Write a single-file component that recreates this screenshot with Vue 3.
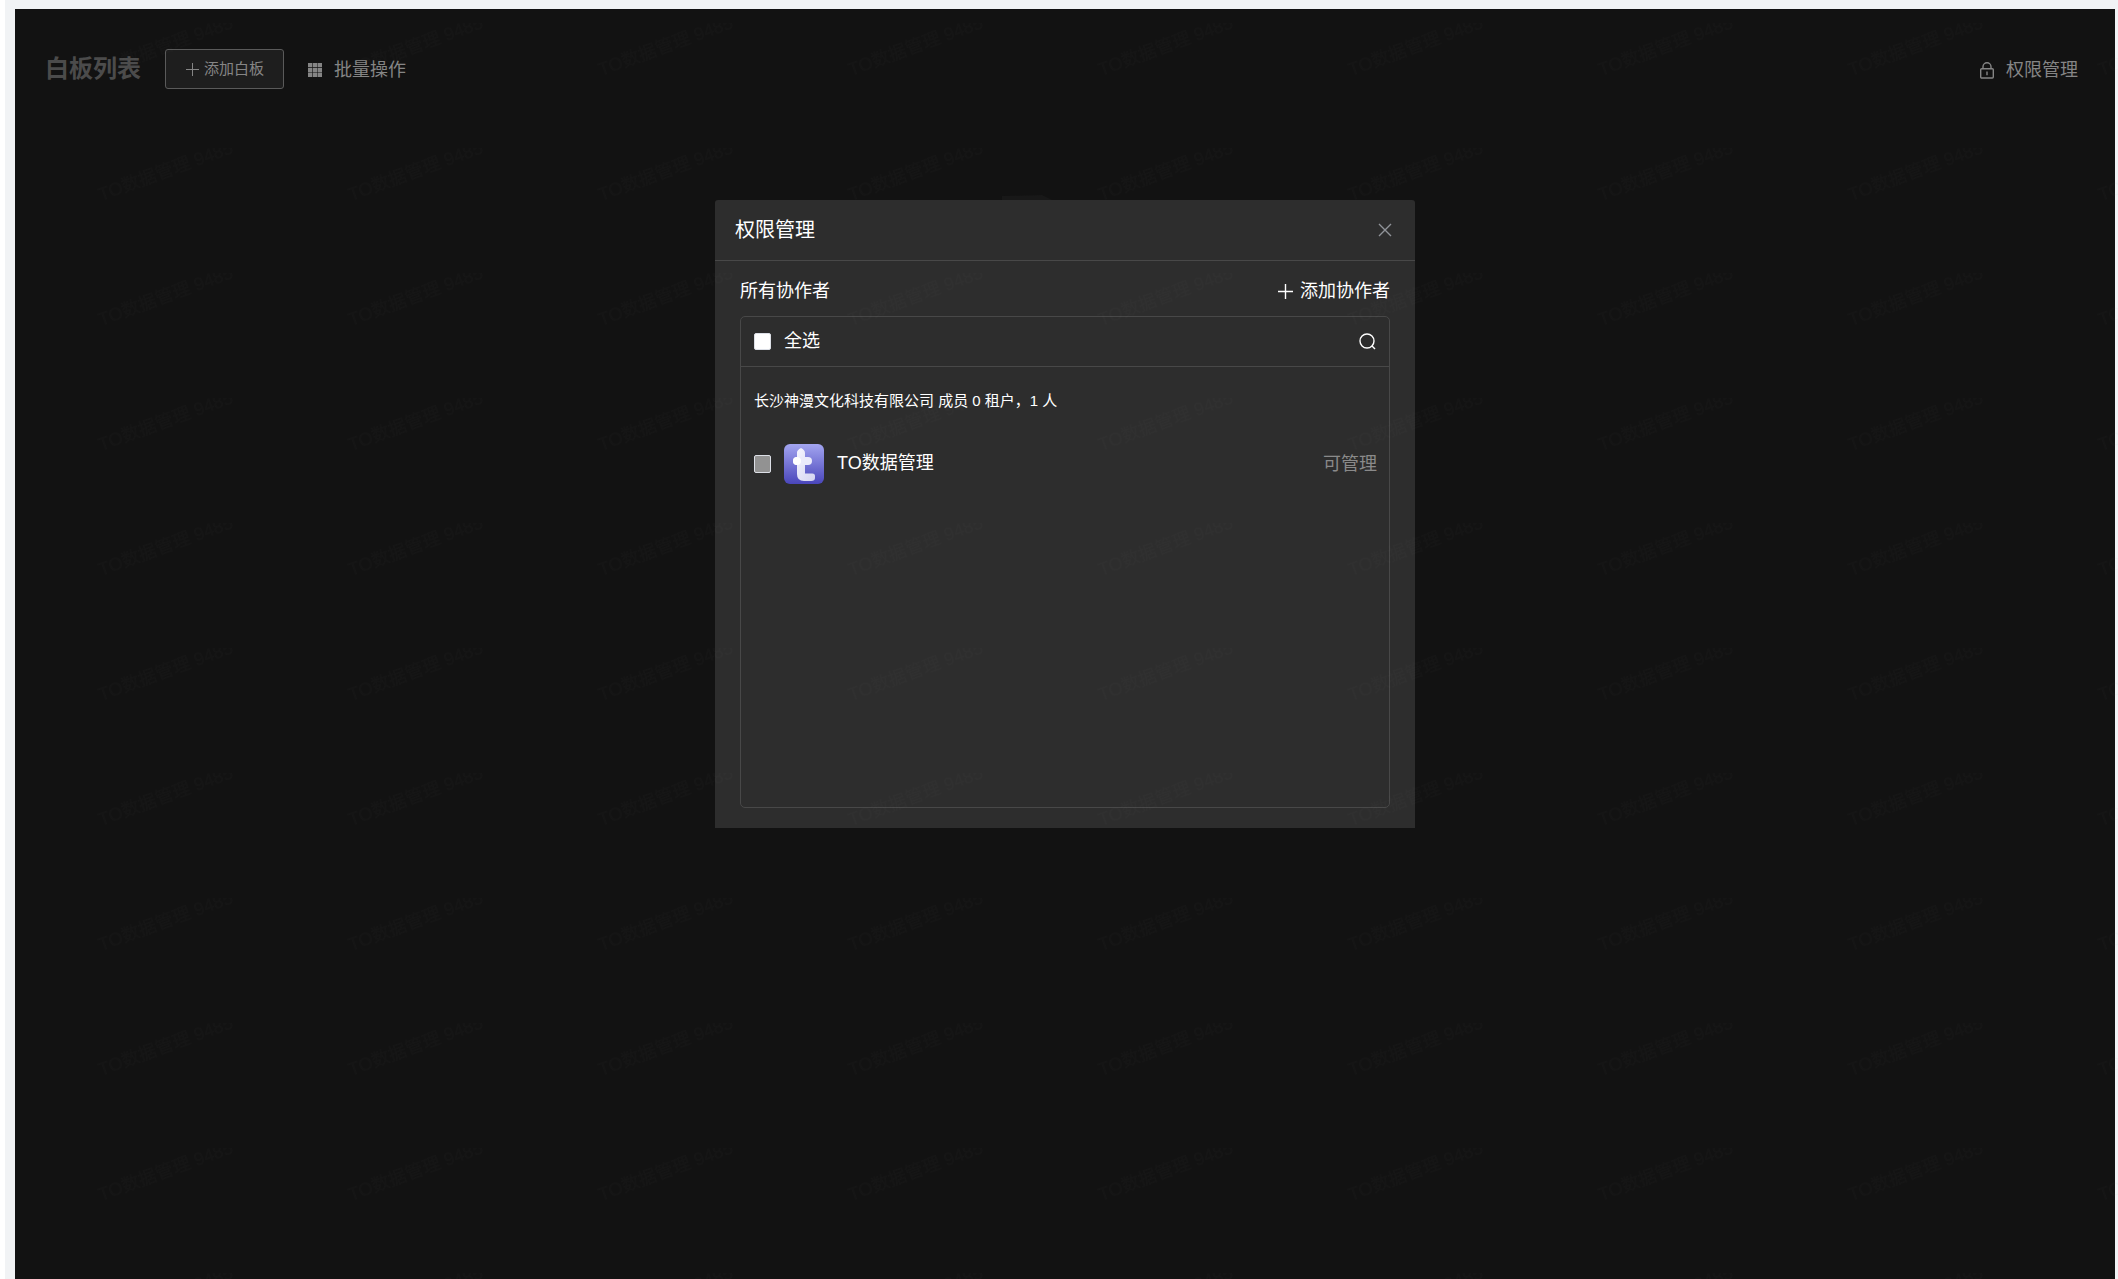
<script setup>
import {ref} from "vue"

const allChecked = ref(false)
const members = ref([
    {id: 1, name: "TO数据管理", role: "可管理", checked: false, disabled: true}
])

const toggleAll = () => {
    members.value.forEach((m) => {
        if (!m.disabled) m.checked = allChecked.value
    })
}
</script>

<template>
    <div class="page">
        <main class="board">
            <header class="toolbar">
                <h1>白板列表</h1>
                <button type="button" class="add-board">
                    <svg viewBox="0 0 15 15" width="15" height="15"><path d="M7.5 1v13M1 7.5h13" /></svg>
                    <span>添加白板</span>
                </button>
                <button type="button" class="tool">
                    <svg class="grid-icon" viewBox="0 0 14 14" width="14" height="14">
                        <path d="M0 0h4.300v4.300H0zM4.900 0h4.300v4.300H4.900zM9.700 0H14v4.300H9.700zM0 4.900h4.300v4.300H0zM4.900 4.900h4.300v4.300H4.900zM9.700 4.900H14v4.300H9.700zM0 9.700h4.300V14H0zM4.900 9.700h4.300V14H4.900zM9.700 9.700H14V14H9.700z" />
                    </svg>
                    <span>批量操作</span>
                </button>
                <button type="button" class="tool auth">
                    <svg class="bold" viewBox="0 0 14 17" width="14" height="17">
                        <path d="M1.700 6.700h10.600a1 1 0 0 1 1 1v7.300a1 1 0 0 1-1 1H1.700a1 1 0 0 1-1-1V7.700a1 1 0 0 1 1-1zM3 6.700V4.700a4 4 0 0 1 8 0v2M7 9.500v3.800" />
                    </svg>
                    <span>权限管理</span>
                </button>
            </header>
            <div class="empty">
                <svg viewBox="0 0 130 100" width="130" height="100"><path d="M2 1l40-1 10 5h78v95H0z" /></svg>
            </div>

            <div class="overlay">
                <section class="dialog" role="dialog" aria-labelledby="dialogtitle">
                    <header class="dialog-head">
                        <h2 id="dialogtitle">权限管理</h2>
                        <button type="button" class="close" aria-label="关闭">
                            <svg class="bold" viewBox="0 0 14 14" width="14" height="14"><path d="M1 1l12 12M13 1L1 13" /></svg>
                        </button>
                    </header>
                    <div class="dialog-body">
                        <div class="collab">
                            <span>所有协作者</span>
                            <button type="button" class="add-user">
                                <svg class="bold" viewBox="0 0 15 15" width="15" height="15"><path d="M7.500 0v15M0 7.500h15" /></svg>
                                <span>添加协作者</span>
                            </button>
                        </div>
                        <div class="panel">
                            <div class="panel-head">
                                <label class="check-label" for="checkall">
                                    <input id="checkall" v-model="allChecked" type="checkbox" @change="toggleAll">
                                    <span>全选</span>
                                </label>
                                <button type="button" class="search" aria-label="搜索">
                                    <svg class="bold" viewBox="0 0 17 17" width="17" height="17"><circle cx="8" cy="8" r="7" /><path d="M12.800 12.800l3.200 3.200" /></svg>
                                </button>
                            </div>
                            <div class="panel-body">
                                <p class="org">长沙神漫文化科技有限公司 成员 0 租户，1 人</p>
                                <div v-for="m in members" :key="m.id" class="member">
                                    <label class="check-label" :for="'member' + m.id">
                                        <input :id="'member' + m.id" v-model="m.checked" type="checkbox" :disabled="m.disabled">
                                        <svg class="avatar" viewBox="0 0 40 40" width="40" height="40">
                                            <defs>
                                                <linearGradient id="avatarbg" x1="0" y1="0" x2="0" y2="1">
                                                    <stop offset="0" stop-color="#a3a5f0" />
                                                    <stop offset="1" stop-color="#4a46bb" />
                                                </linearGradient>
                                                <linearGradient id="stem" x1="0" y1="0" x2="1" y2="1">
                                                    <stop offset="0" stop-color="#f6f6ff" />
                                                    <stop offset="1" stop-color="#d3d3f0" />
                                                </linearGradient>
                                            </defs>
                                            <rect width="40" height="40" rx="6" fill="url(#avatarbg)" />
                                            <path d="M13 8.500Q13 6 17 4q4 2 4 5V29.500h7.500q2.500 0 2.500 2.500v2q0 3-4 3h-7q-7 0-7-7z" fill="url(#stem)" />
                                            <rect x="9" y="13" width="19" height="8" rx="4" fill="#ebebfb" />
                                            <circle cx="13" cy="17" r="4" fill="#fff" />
                                        </svg>
                                        <span class="name">{{ m.name }}</span>
                                    </label>
                                    <span class="role">{{ m.role }}</span>
                                </div>
                            </div>
                        </div>
                    </div>
                </section>
            </div>
        </main>

        <!-- tiled user watermark, above everything -->
        <svg class="watermark" width="100%" height="100%" aria-hidden="true">
            <defs>
                <pattern id="mark" x="80" y="23" width="250" height="125" patternUnits="userSpaceOnUse">
                    <text x="16" y="53" transform="rotate(-20 16 53)">TO数据管理 9485</text>
                </pattern>
            </defs>
            <rect y="23" width="100%" height="100%" fill="url(#mark)" />
        </svg>
    </div>
</template>

<style>
    body {
        margin: 0;
        background-color: #ffffff;
    }
</style>

<style scoped>
    .page {
        position: relative;
        display: flex;
        box-sizing: border-box;
        min-height: 100vh;
        margin-left: 5px;
        padding: 9px 3px 0 10px;
        background-color: #f1f3f5;
        font-family: "Liberation Sans", "Noto Sans CJK SC", sans-serif;
        font-size: 18px;
        line-height: 30px;
    }

    .board {
        position: relative;
        flex: 1;
        background-color: #121212;
    }

    button {
        display: flex;
        align-items: center;
        padding: 0;
        border: 0;
        background: none;
        color: inherit;
        font: inherit;
        cursor: pointer;
    }

    svg {
        display: block;
        flex: none;
        fill: none;
        stroke: currentColor;
    }

    .bold {
        stroke-width: 1.4;
    }

    .toolbar {
        display: flex;
        align-items: center;
        gap: 24px;
        height: 120px;
        padding: 0 37px 0 30px;
        color: #858585;
    }

    h1 {
        margin: 0;
        color: #4b4b4b;
        font-size: 24px;
        font-weight: 700;
    }

    .toolbar .add-board {
        gap: 4px;
        height: 40px;
        padding: 0 19px;
        border: 1px solid #5a5a5a;
        border-radius: 3px;
        background-color: #1e1e1e;
        font-size: 15px;
    }

    .tool {
        gap: 12px;
        padding-top: 2px;
    }

    .grid-icon {
        fill: currentColor;
        stroke: none;
    }

    .auth {
        margin-left: auto;
    }

    .empty {
        display: flex;
        justify-content: center;
        padding-top: 66px;
    }

    .empty svg {
        fill: #181818;
        stroke: none;
    }

    .overlay {
        position: absolute;
        inset: 0;
        padding: 191px 20px 20px;
    }

    .dialog {
        max-width: 700px;
        margin: 0 auto;
        border-radius: 3px 3px 0 0;
        background-color: #2d2d2d;
        color: #ffffff;
    }

    .dialog-head {
        display: flex;
        align-items: center;
        justify-content: space-between;
        height: 60px;
        padding: 0 23px 0 20px;
        border-bottom: 1px solid #484848;
    }

    h2 {
        margin: 0;
        font-size: 20px;
        font-weight: 400;
    }

    .close {
        color: #909399;
    }

    .dialog-body {
        padding: 15px 25px 20px;
    }

    .collab {
        display: flex;
        justify-content: space-between;
        margin-bottom: 10px;
    }

    .add-user {
        gap: 7px;
    }

    .panel {
        border: 1px solid #484848;
        border-radius: 5px;
    }

    .panel-head {
        display: flex;
        align-items: center;
        justify-content: space-between;
        height: 48px;
        padding: 0 13px 1px;
        border-bottom: 1px solid #484848;
    }

    .check-label {
        display: flex;
        align-items: center;
        gap: 13px;
    }

    input {
        box-sizing: border-box;
        width: 17px;
        height: 17px;
        margin: 0;
        appearance: none;
        border: 1px solid #dcdfe6;
        border-radius: 2px;
        background-color: #ffffff;
    }

    input:checked {
        background-color: #409eff;
    }

    input:disabled {
        height: 18px;
        background-color: #929292;
    }

    .panel-body {
        box-sizing: border-box;
        min-height: 440px;
        padding: 19px 12px 20px 13px;
    }

    .org {
        margin: 0 0 28px;
        font-size: 15px;
    }

    .member {
        display: flex;
        align-items: center;
        justify-content: space-between;
    }

    .avatar {
        stroke: none;
    }

    .name {
        padding-bottom: 3px;
    }

    .role {
        color: #8a8a8a;
    }

    .watermark {
        position: absolute;
        inset: 0;
        pointer-events: none;
        stroke: none;
    }

    .watermark text {
        fill: rgba(128, 128, 128, 0.03);
        font-size: 18px;
    }
</style>
